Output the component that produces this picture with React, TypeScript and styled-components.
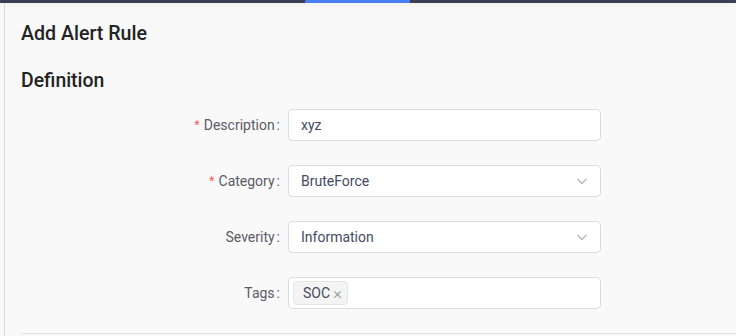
import { createGlobalStyle, styled } from 'styled-components';

const GlobalStyle = createGlobalStyle`
  html, body {
    margin: 0;
    padding: 0;
    background: #f9f9f9;
    font-family: Roboto, "Liberation Sans", sans-serif;
    overflow: hidden;
  }
`;

const ChevronDown = () => (
  <svg width="12" height="12" viewBox="0 0 12 12" fill="none">
    <path d="M1.5 4 L6 8.5 L10.5 4" stroke="#b0b0b0" strokeWidth="1.1" />
  </svg>
);

interface FieldProps {
  label: string;
  required?: boolean;
  children: React.ReactNode;
}

const Field = ({ label, required, children }: FieldProps) => (
  <Row>
    <Label>
      {required && <Star>*</Star>}
      {label}
      <Colon>:</Colon>
    </Label>
    {children}
  </Row>
);

export default function App() {
  return (
    <>
      <GlobalStyle />
      <TopBar>
        <BarPart $w={305} />
        <BarPart $w={105} $active />
        <BarPart />
      </TopBar>
      <Main>
        <Title>Add Alert Rule</Title>
        <Section>Definition</Section>
        <Form>
          <Field label="Description" required>
            <Input>xyz</Input>
          </Field>
          <Field label="Category" required>
            <Input>
              BruteForce
              <ChevronDown />
            </Input>
          </Field>
          <Field label="Severity">
            <Input>
              Information
              <ChevronDown />
            </Input>
          </Field>
          <Field label="Tags">
            <TagInput>
              <Tag>
                SOC <TagClose>×</TagClose>
              </Tag>
            </TagInput>
          </Field>
        </Form>
        <Divider />
      </Main>
    </>
  );
}

const TopBar = styled.div`
  display: flex;
  height: 3px;
  box-shadow: 0 2px 6px rgba(0, 0, 0, 0.06);
  position: relative;
  z-index: 1;
`;

const BarPart = styled.div<{ $w?: number; $active?: boolean }>`
  ${({ $w }) => ($w ? `width: ${$w}px;` : 'flex: 1;')}
  background: ${({ $active }) => ($active ? '#4a7ef5' : '#3c3f52')};
`;

const Main = styled.div`
  margin-left: 4px;
  border-left: 1px solid #dcdcdc;
  padding: 18px 0 0 16px;
  height: 333px;
  box-sizing: border-box;
`;

const Title = styled.h1`
  margin: 0;
  font-size: 19.6px;
  font-weight: 500;
  color: #232323;
  line-height: 26px;
`;

const Section = styled.h2`
  margin: 21px 0 0;
  font-size: 19.4px;
  font-weight: 500;
  color: #232323;
  line-height: 26px;
`;

const Form = styled.div`
  display: flex;
  flex-direction: column;
  gap: 24px;
  margin-top: 15px;
`;

const Row = styled.div`
  display: flex;
  align-items: center;
  height: 32px;
`;

const Label = styled.label`
  width: 267px;
  display: flex;
  justify-content: flex-end;
  align-items: center;
  font-size: 14px;
  color: #5b5b66;
`;

const Star = styled.span`
  color: #ff4d4f;
  font-size: 14px;
  margin-right: 4px;
  font-family: SimSun, "Liberation Sans", sans-serif;
`;

const Colon = styled.span`
  margin: 0 8px 0 2px;
`;

const Input = styled.div`
  width: 313px;
  height: 32px;
  box-sizing: border-box;
  background: #fff;
  border: 1px solid #dcdcdc;
  border-radius: 4px;
  padding: 0 12px;
  display: flex;
  align-items: center;
  justify-content: space-between;
  font-size: 14px;
  color: #464a5e;
`;

const TagInput = styled(Input)`
  padding: 0 4px;
  justify-content: flex-start;
`;

const Tag = styled.span`
  display: inline-flex;
  align-items: center;
  height: 24px;
  box-sizing: border-box;
  padding: 0 5px 0 9px;
  background: #f4f4f4;
  border: 1px solid #e6e6e6;
  border-radius: 4px;
  color: #464a5e;
  font-size: 14px;
`;

const TagClose = styled.span`
  color: #999;
  font-size: 17px;
  font-weight: 300;
  margin-left: 3px;
`;

const Divider = styled.div`
  height: 1px;
  background: #e2e2e2;
  margin-top: 24px;
`;
